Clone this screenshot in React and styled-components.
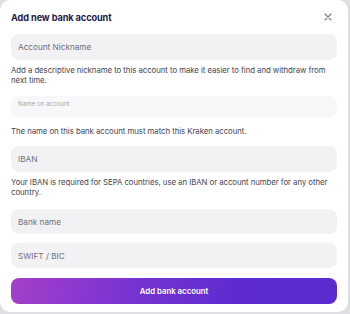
import React from 'react';
import styled, { createGlobalStyle } from 'styled-components';

const Global = createGlobalStyle`
  html, body {
    margin: 0;
    padding: 0;
    background: #dedee3;
  }
  body {
    font-family: Inter, "Noto Sans", sans-serif;
    -webkit-font-smoothing: antialiased;
  }
`

const Modal = styled.div`
  width: 348px;
  height: 312px;
  box-sizing: border-box;
  background: #fff;
  border-radius: 10px;
  padding: 9px 11px 0 11px;
  display: flex;
  flex-direction: column;
`

const Header = styled.div`
  display: flex;
  align-items: center;
  justify-content: space-between;
  height: 16px;
  margin-bottom: 9px;
`

const Title = styled.h2`
  margin: 0;
  font-size: 9.2px;
  font-weight: 700;
  color: #1e1a4c;
  letter-spacing: -0.1px;
`

const Close = styled.button`
  border: 0;
  background: none;
  padding: 0;
  margin-right: 4px;
  width: 10px;
  height: 10px;
  display: flex;
  align-items: center;
  justify-content: center;
  cursor: pointer;
`

const Field = styled.div`
  height: ${p => p.h || 26}px;
  border-radius: 8px;
  background: ${p => (p.light ? '#f8f8fa' : '#f2f2f5')};
  display: flex;
  align-items: ${p => (p.label ? 'flex-start' : 'center')};
  padding: ${p => (p.label ? '4px 7px' : '0 7px')};
  box-sizing: border-box;
  margin-top: ${p => p.mt || 0}px;
`

const Placeholder = styled.span`
  font-size: ${p => (p.small ? 6.2 : 8.2)}px;
  color: ${p => (p.small ? '#a6a6b0' : '#6e6e7c')};
`

const Help = styled.p`
  margin: ${p => p.mt || 5}px 0 0 0;
  font-size: 7.8px;
  line-height: 10px;
  color: #454554;
  letter-spacing: -0.05px;
`

const Submit = styled.button`
  margin-top: 10px;
  height: 26px;
  border: 0;
  border-radius: 8px;
  background: linear-gradient(100deg, #a43fca 0%, #7a34d2 35%, #5d2bd1 70%, #5a2ccf 100%);
  color: #fff;
  font-family: Inter, "Noto Sans", sans-serif;
  font-size: 7.8px;
  font-weight: 600;
  cursor: pointer;
`

const App = () => {
  return (
    <>
      <Global />
      <Modal>
        <Header>
          <Title>Add new bank account</Title>
          <Close aria-label="close">
            <svg width="8" height="8" viewBox="0 0 8 8">
              <path d="M1 1L7 7M7 1L1 7" stroke="#7a7a86" strokeWidth="1.1" strokeLinecap="round" />
            </svg>
          </Close>
        </Header>

        <Field><Placeholder>Account Nickname</Placeholder></Field>
        <Help mt={5}>Add a descriptive nickname to this account to make it easier to find and withdraw from next time.</Help>

        <Field light label h={22} mt={11}><Placeholder small>Name on account</Placeholder></Field>
        <Help mt={8}>The name on this bank account must match this Kraken account.</Help>

        <Field mt={10}><Placeholder>IBAN</Placeholder></Field>
        <Help>Your IBAN is required for SEPA countries, use an IBAN or account number for any other country.</Help>

        <Field mt={12} h={25}><Placeholder>Bank name</Placeholder></Field>
        <Field mt={9} h={25}><Placeholder>SWIFT / BIC</Placeholder></Field>

        <Submit>Add bank account</Submit>
      </Modal>
    </>
  );
};

export default App;
